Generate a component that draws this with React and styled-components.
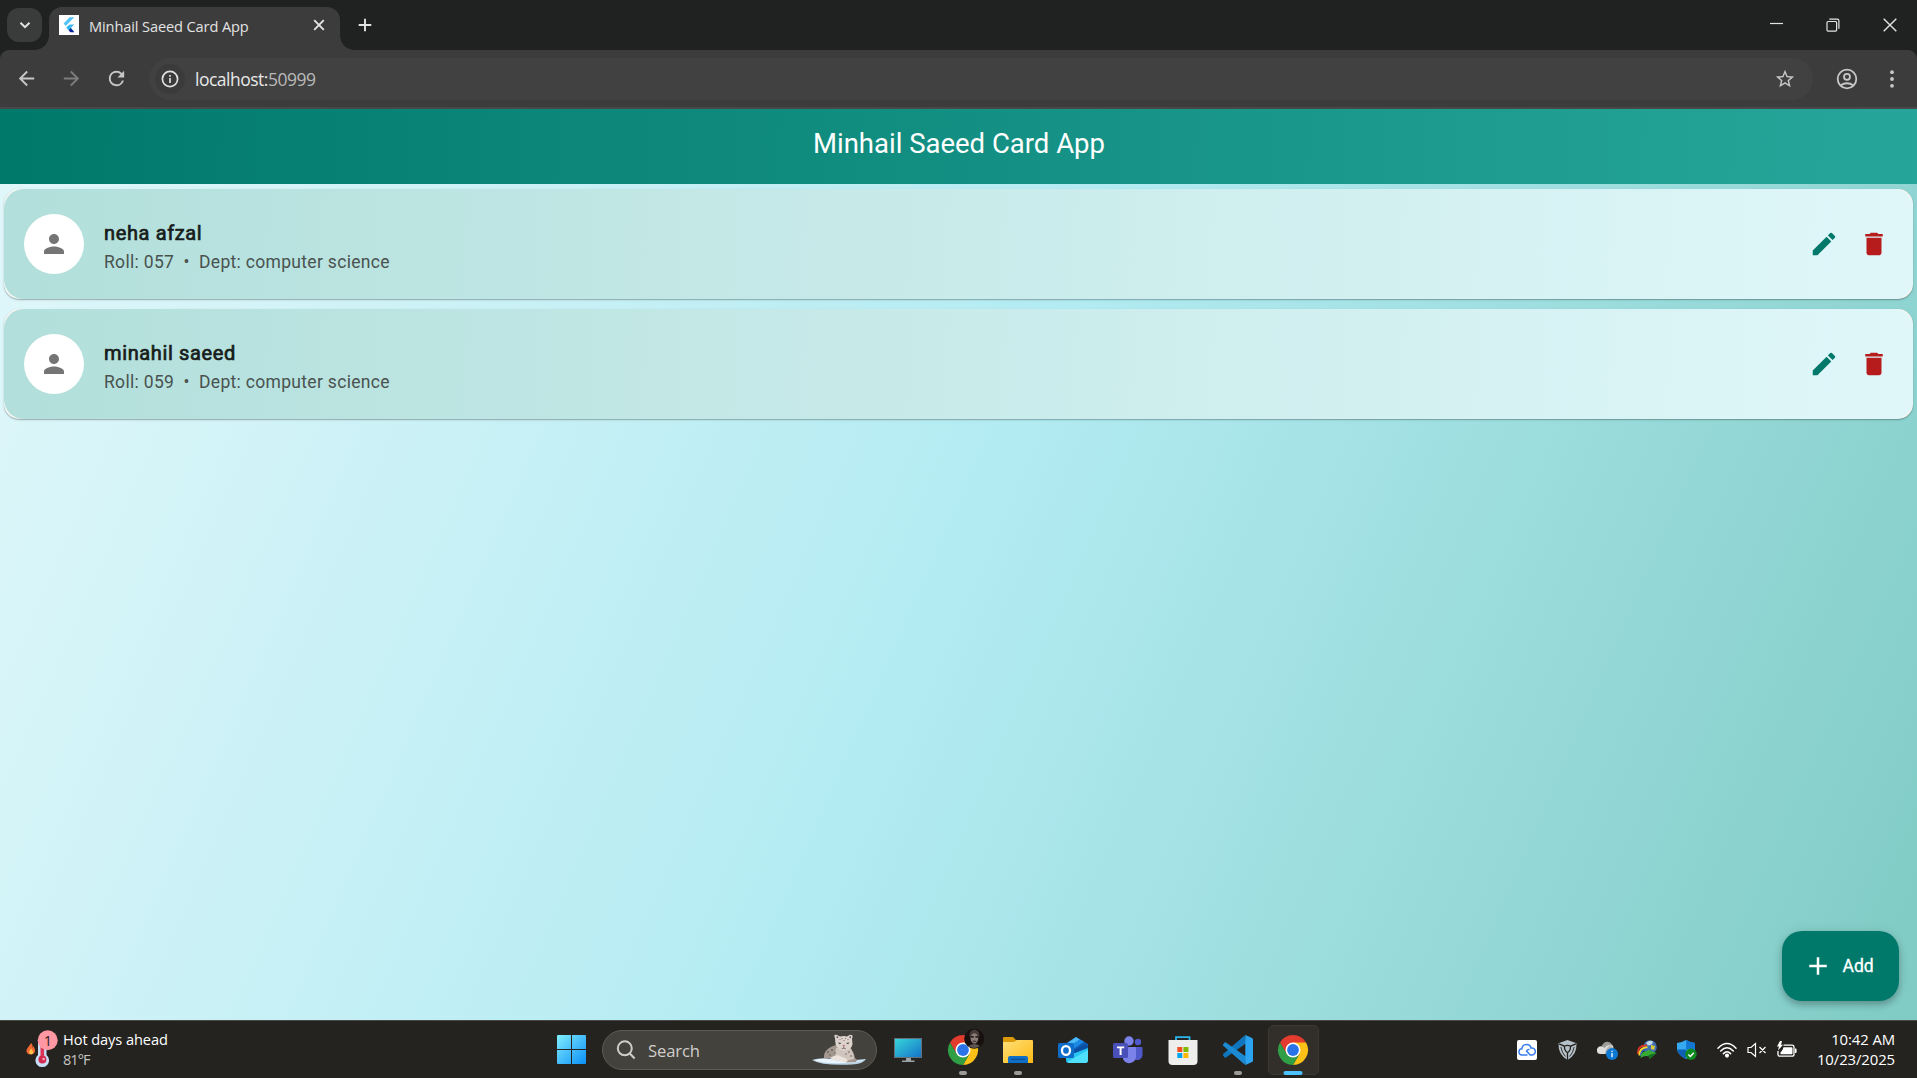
import React from "react";
import styled, { createGlobalStyle } from "styled-components";

const UI = `"Open Sans", "Noto Sans", sans-serif`;
const APP = `Roboto, "Liberation Sans", sans-serif`;

const Global = createGlobalStyle`
  * { box-sizing: border-box; }
  body { margin: 0; overflow: hidden; background: #202221; }
  button { border: 0; padding: 0; background: none; font: inherit; color: inherit; }
  svg { display: block; flex: none; }
`;

const Desktop = styled.div`
  display: flex;
  flex-direction: column;
  width: 100vw;
  height: 100vh;
  font-family: ${UI};
`;

/* ---------- browser chrome ---------- */
const TabStrip = styled.div`
  display: flex;
  height: 50px;
  padding: 7px 0 0 7px;
  background: #202221;
  color: #e3e3e3;
`;
const TabSearch = styled.button`
  display: grid;
  place-items: center;
  width: 35px;
  height: 34px;
  margin: 1px 7px 0 0;
  border-radius: 12px;
  background: #3a3b3b;
`;
const Tab = styled.div`
  position: relative;
  display: flex;
  align-items: center;
  width: 291px;
  height: 43px;
  padding: 0 11px 7px 10px;
  border-radius: 13px 13px 0 0;
  background: #3c3c3c;
  &::before,
  &::after {
    content: "";
    position: absolute;
    bottom: 0;
    width: 14px;
    height: 14px;
  }
  &::before {
    left: -14px;
    background: radial-gradient(circle at 0 0, transparent 13.5px, #3c3c3c 14px);
  }
  &::after {
    right: -14px;
    background: radial-gradient(circle at 100% 0, transparent 13.5px, #3c3c3c 14px);
  }
`;
const TabTitle = styled.span`
  flex: 1;
  margin-left: 10px;
  padding-top: 1px;
  font-size: 14.6px;
  line-height: 20px;
  letter-spacing: -0.12px;
  white-space: nowrap;
`;
const NewTab = styled.button`
  display: grid;
  place-items: center;
  width: 36px;
  height: 36px;
  margin-left: 7px;
`;
const WindowControls = styled.div`
  display: flex;
  margin: -7px -1px 0 auto;
  height: 49px;
`;
const WindowButton = styled.button`
  display: grid;
  place-items: center;
  width: ${(p) => p.$w || 57}px;
`;
const ToolbarWrap = styled.div`
  background: #202221;
`;
const Toolbar = styled.div`
  display: flex;
  align-items: center;
  height: 59px;
  padding: 0 3px 0 4px;
  border-bottom: 2px solid #484848;
  border-radius: 9px 9px 0 0;
  background: #3c3c3c;
  color: #c7c7c7;
`;
const NavButton = styled.button`
  display: grid;
  place-items: center;
  width: 45px;
  height: 45px;
  color: ${(p) => (p.$dim ? "#7d7d7d" : "#c7c7c7")};
`;
const AddressBar = styled.div`
  display: flex;
  align-items: center;
  flex: 1;
  height: 42px;
  margin: 0 11px 0 10px;
  padding: 0 17px 0 6px;
  border-radius: 21px;
  background: #414141;
`;
const SiteInfo = styled.span`
  display: grid;
  place-items: center;
  width: 30px;
  height: 30px;
  border-radius: 50%;
  background: #3b3b3b;
  color: #e0e0e0;
`;
const Url = styled.span`
  flex: 1;
  margin-left: 10px;
  font-size: 17.5px;
  line-height: 24px;
  letter-spacing: -0.5px;
  color: #e8e8e8;
  span { color: #b9b9b9; }
`;

/* ---------- application page ---------- */
const Page = styled.main`
  position: relative;
  display: flex;
  flex-direction: column;
  flex: 1;
  font-family: ${APP};
`;
const AppBar = styled.header`
  display: flex;
  align-items: center;
  justify-content: center;
  height: 75px;
  padding: 0 0 7px 1px;
  background: linear-gradient(92.24deg, #00796b, #26a69a);
  color: #fff;
  font-size: 27.5px;
  line-height: 35px;
`;
const List = styled.section`
  display: flex;
  flex-direction: column;
  gap: 10px;
  flex: 1;
  padding: 5px 4px;
  background: linear-gradient(113.56deg, #e0f7fa, #b2ebf2 50%, #80cbc4);
`;
const Card = styled.article`
  border-radius: 15px;
  background: #f0f5f2;
  box-shadow: 0 1px 1px rgba(0, 0, 0, 0.22), 0 1px 3px rgba(0, 0, 0, 0.11);
`;
const CardBody = styled.div`
  display: flex;
  align-items: center;
  height: 110px;
  padding: 0 14px 0 20px;
  border-radius: 20px;
  background: linear-gradient(93.3deg, #b2dfdb, #e0f7fa);
`;
const Avatar = styled.div`
  display: grid;
  place-items: center;
  width: 60px;
  height: 60px;
  border-radius: 50%;
  background: #fff;
  color: #757575;
`;
const Details = styled.div`
  flex: 1;
  margin-left: 20px;
  padding-top: 6px;
`;
const Name = styled.div`
  font-size: 20px;
  line-height: 30px;
  letter-spacing: 0.625px;
  color: #171d1b;
  -webkit-text-stroke: 0.7px #171d1b;
`;
const Meta = styled.div`
  font-size: 17.5px;
  line-height: 29px;
  letter-spacing: 0.3125px;
  color: #49524f;
  white-space: pre;
`;
const IconButton = styled.button`
  display: grid;
  place-items: center;
  width: 50px;
  height: 50px;
  color: ${(p) => p.$color};
`;
const AddButton = styled.button`
  position: absolute;
  right: 18px;
  bottom: 19px;
  display: flex;
  align-items: center;
  width: 117px;
  height: 70px;
  padding-left: 20.5px;
  gap: 10px;
  border-radius: 20px;
  background: #00796b;
  box-shadow: 0 4px 6px rgba(0, 0, 0, 0.22), 0 1px 12px rgba(0, 0, 0, 0.1);
  color: #fff;
  font-size: 17.5px;
  letter-spacing: 0;
  -webkit-text-stroke: 0.3px #fff;
`;

/* ---------- taskbar ---------- */
const Taskbar = styled.footer`
  display: flex;
  height: 58px;
  border-top: 1px solid #494945;
  background: #24231f;
  color: #fff;
`;
const Weather = styled.div`
  display: flex;
  align-items: center;
  width: 544px;
  padding: 0 0 2px 24px;
  gap: 5px;
`;
const WeatherText = styled.div`
  font-size: 14.6px;
  line-height: 20px;
  letter-spacing: -0.08px;
  div + div { color: #c4c4c2; letter-spacing: -1px; }
`;
const Slot = styled.div`
  position: relative;
  display: grid;
  place-items: center;
  width: 55.1px;
  height: 58px;
  padding-bottom: 1px;
  &::before {
    content: "";
    position: absolute;
    inset: 4px 2px;
    border: ${(p) => (p.$active ? "1px solid #3b3935" : "0")};
    border-radius: 5px;
    background: ${(p) => (p.$active ? "#322f2b" : "none")};
  }
  &::after {
    content: "";
    position: absolute;
    bottom: 4px;
    left: 50%;
    width: ${(p) => (p.$active ? 19 : 8)}px;
    height: 4px;
    border-radius: 2px;
    transform: translateX(-50%);
    background: ${(p) => (p.$active ? "#4cc2ff" : p.$open ? "#9c9b99" : "none")};
  }
  svg { position: relative; }
`;
const SearchBox = styled.div`
  display: flex;
  align-items: center;
  width: 275px;
  height: 40px;
  margin: 9px 3px 0 3px;
  padding: 0 9px 0 13px;
  border: 1px solid #5d5b56;
  border-radius: 20px;
  background: #44423d;
  color: #cfcecb;
  font-size: 16.6px;
  letter-spacing: -0.15px;
  span { flex: 1; margin: 1px 0 0 12px; }
`;
const Tray = styled.div`
  display: flex;
  align-items: center;
  margin-left: auto;
  padding: 0 22px 0 0;
`;
const TrayIcon = styled.div`
  display: grid;
  place-items: center;
  width: ${(p) => p.$w || 40}px;
`;
const Clock = styled.div`
  width: 88px;
  padding-bottom: 2px;
  font-size: 14.9px;
  line-height: 20px;
  letter-spacing: -0.1px;
  text-align: right;
`;

/* ---------- icons ---------- */
const Stroke = ({ size = 20, w = 2, children, box = 24, ...rest }) => (
  <svg width={size} height={size} viewBox={`0 0 ${box} ${box}`} fill="none" stroke="currentColor" strokeWidth={w} {...rest}>
    {children}
  </svg>
);
const Glyph = ({ size = 30, d }) => (
  <svg width={size} height={size} viewBox="0 0 24 24" fill="currentColor"><path d={d} /></svg>
);
const PERSON = "M12 12c2.21 0 4-1.79 4-4s-1.79-4-4-4-4 1.79-4 4 1.79 4 4 4zm0 2c-2.67 0-8 1.34-8 4v2h16v-2c0-2.66-5.33-4-8-4z";
const EDIT = "M3 17.25V21h3.75L17.81 9.94l-3.75-3.75L3 17.25zM20.71 7.04a1 1 0 0 0 0-1.41l-2.34-2.34a1 1 0 0 0-1.41 0l-1.83 1.83 3.75 3.75 1.83-1.83z";
const TRASH = "M6 19c0 1.1.9 2 2 2h8c1.1 0 2-.9 2-2V7H6v12zM19 4h-3.5l-1-1h-5l-1 1H5v2h14V4z";
const ARROW = "M20 11H7.83l5.59-5.59L12 4l-8 8 8 8 1.41-1.41L7.83 13H20v-2z";
const REFRESH = "M17.65 6.35A7.96 7.96 0 0 0 12 4a8 8 0 1 0 7.73 10h-2.08A6 6 0 1 1 12 6c1.66 0 3.14.69 4.22 1.78L13 11h7V4l-2.35 2.35z";
const STAR = "M22 9.24l-7.19-.62L12 2 9.19 8.63 2 9.24l5.46 4.73L5.82 21 12 17.27 18.18 21l-1.63-7.03L22 9.24zM12 15.4l-3.76 2.27 1-4.28-3.32-2.88 4.38-.38L12 6.1l1.71 4.04 4.38.38-3.32 2.88 1 4.28L12 15.4z";
const PLUS = "M19 13h-6v6h-2v-6H5v-2h6V5h2v6h6v2z";

const FlutterIcon = () => (
  <svg width="20" height="20" viewBox="0 0 20 20">
    <path fill="#fff" d="M0 0h20v20H0z" />
    <path fill="#54c5f8" d="M10.7 2.3h4.5L6.8 11 4.6 8.6z" />
    <path fill="#40b6f0" d="M10.7 9.5h4.5L12 12.8H7.4z" />
    <path fill="#29b6f6" d="M7.3 12.8l2.3-2.3 2.3 2.3-2.3 2.3z" />
    <path fill="#01579b" d="M9.6 15.1l2.3-2.3 3.3 4.1h-4z" />
    <path fill="#0d1fa0" d="M9.6 15.1l2.5-.8 3.1 2.9h-3.6z" />
  </svg>
);
const ChromeIcon = ({ photo }) => (
  <svg width="30" height="30" viewBox="0 0 30 30" overflow="visible">
    <path fill="#e33b2e" d="M15 15L2 7.5A15 15 0 0 1 28 7.5z" />
    <path fill="#fbc116" d="M15 7.5h13A15 15 0 0 1 15 30l6.5-11.2z" />
    <path fill="#e33b2e" d="M2 7.5L8.5 18.7 15 7.5z" />
    <path fill="#2f9e44" d="M2 7.5L8.5 18.7l6.5 3.8 6.5-3.7L15 30A15 15 0 0 1 2 7.5z" />
    <circle cx="15" cy="15" r="7.5" fill="#fff" />
    <circle cx="15" cy="15" r="5.9" fill="#2a73e8" />
    {photo && (
      <g>
        <circle cx="26.2" cy="3.8" r="10" fill="#17100f" />
        <ellipse cx="26.4" cy="0" rx="5" ry="5.4" fill="#453b39" />
        <ellipse cx="26.4" cy="3.4" rx="3.8" ry="5.2" fill="#8d7d79" />
        <path fill="#2b2120" d="M22.3 1h3.4v1.800h-3zM27.200 1h3.400v1.800h-3zM24.600 5.800h3.800v1h-3.800z" />
        <path fill="#5e5350" d="M20.500 11q6-4 11.500 0-5.500 4-11.500 0z" />
      </g>
    )}
  </svg>
);
const WeatherIcon = () => (
  <svg width="34" height="40" viewBox="0 0 34 40">
    <path fill="#ef6a30" d="M7 14c-1 3-5 5-4.500 9a4.600 4.600 0 0 0 8.500-.5C11.400 20 10 19 9.600 17l-1 2C9 17 8.500 15 7 14z" />
    <path fill="#ffc14a" d="M7 19c0 2-2 2.500-2 4.500a2.200 2.200 0 0 0 4.300 0C9.300 21.500 7.500 21 7 19z" />
    <path fill="#c9def7" d="M14 12h8.500v14a6.800 6.800 0 1 1-8.500 0z" />
    <path fill="#df3355" d="M16.500 14h3.600v14h-3.600z" />
    <circle cx="18.400" cy="30.500" r="4" fill="#d42a4f" />
    <circle cx="19.600" cy="30" r="1.300" fill="#f7a6b7" />
    <circle cx="23.700" cy="11.300" r="10" fill="#ff98a3" />
    <text x="23.800" y="16.500" fontSize="14.500" textAnchor="middle" fill="#2b1b1d" fontFamily="Open Sans">1</text>
  </svg>
);
const StartIcon = () => (
  <svg width="29" height="29" viewBox="0 0 29 29">
    <defs>
      <linearGradient id="start" gradientUnits="userSpaceOnUse" x1="0" y1="0" x2="29" y2="29">
        <stop stopColor="#7ff0ff" /><stop offset=".5" stopColor="#46bdfb" /><stop offset="1" stopColor="#0a90f6" />
      </linearGradient>
    </defs>
    <path fill="url(#start)" d="M1 0h13v14H0V1a1 1 0 0 1 1-1zM15 0h13a1 1 0 0 1 1 1v13H15zM0 15h14v14H1a1 1 0 0 1-1-1zM15 15h14v13a1 1 0 0 1-1 1H15z" />
  </svg>
);
const LeopardIcon = () => (
  <svg width="55" height="32" viewBox="0 0 55 32">
    <path fill="#b9d4e6" d="M0 26q8-3 22-1 14 2 32 0-3 5-14 5.600Q10 32 0 26z" />
    <path fill="#e9f5fb" d="M2 26q12-3 24 1 14 1 27-1-8 3-22 3Q12 30 2 26z" />
    <path fill="#a3978f" d="M12 24q-1-9 12-13l12 2q6 4 7 11 3 2 1 4l-9 .5-8-3.500z" />
    <path fill="#cfc5bd" d="M24 14l14-1q4 6 4 12l-8 2q-8-3-11-6z" />
    <path fill="#ddd3cc" d="M23 4q-2-4 2-3l3 1.500q4-1 7 0L38 .8q4 0 2 3.700l.5 6q-1 5-9 6.500-7-2-8-7z" />
    <path fill="#413b3b" d="M24.500 2l2 1-1.600 1.400zM39 2l-2 1 1.500 1.400zM26 8.500l3.500 .5-2 1.200zM37.500 8.500l-3.500 .5 2 1.200z" />
    <path fill="#c7727c" d="M30.200 11h3.200l-1.600 1.800z" />
    <path stroke="#584f4d" strokeWidth=".7" d="M31.800 12.500v1.600m-2 .6q2-1 4 0" fill="none" />
    <path fill="#ece4dc" d="M18 24q7-5 12-1 5 1 6 4-4 2-9-.5-4 1-9-2.500z" />
    <g fill="#655c58">
      <circle cx="16" cy="18" r=".9" /><circle cx="20" cy="16" r=".9" /><circle cx="18" cy="21" r=".8" /><circle cx="23" cy="19" r=".8" />
      <circle cx="37" cy="18" r=".8" /><circle cx="39" cy="22" r=".8" /><circle cx="34" cy="20" r=".7" /><circle cx="30" cy="4.500" r=".6" /><circle cx="33.500" cy="4.500" r=".6" /><circle cx="32" cy="6.500" r=".5" />
      <circle cx="28" cy="5.500" r=".5" /><circle cx="36" cy="5.500" r=".5" />
    </g>
  </svg>
);
const MonitorIcon = () => (
  <svg width="28" height="26" viewBox="0 0 28 26">
    <defs><linearGradient id="mon" x1="0" y1="0" x2="1" y2="1"><stop stopColor="#37d5d9" /><stop offset="1" stopColor="#1574c9" /></linearGradient></defs>
    <path fill="#65717a" d="M0 1h28v20H0z" />
    <path fill="url(#mon)" d="M1 2h26v18H1z" />
    <path fill="#9aa3a8" d="M12 21h5v2.600h3.500V25H8v-1.400h4z" />
  </svg>
);
const FolderIcon = () => (
  <svg width="30" height="28" viewBox="0 0 30 28">
    <defs><linearGradient id="fold" x1="0" y1="0" x2="1" y2="1"><stop stopColor="#ffe07a" /><stop offset="1" stopColor="#fdb913" /></linearGradient></defs>
    <path fill="#dc9a0b" d="M0 2q0-1 1-1h9l3 3h16v10H0z" />
    <path fill="url(#fold)" d="M0 6h11l3-2h15q1 0 1 1v22H1q-1 0-1-1z" />
    <path fill="#0f6fc6" d="M5 27v-5q0-2 2-2h16q2 0 2 2v5z" />
    <path fill="#0a4c91" d="M8 22.700h14v1.200H8z" />
  </svg>
);
const OutlookIcon = () => (
  <svg width="30" height="28" viewBox="0 0 30 28">
    <path fill="#0f5fb8" d="M5 9l13-8 12 7v6H5z" />
    <path fill="#4cb8f5" d="M8 8l10-7 4 2.500L9 12z" />
    <path fill="#1c8be6" d="M9 12l13-8.500 4 2L14 14z" />
    <path fill="#0b4fa3" d="M14 15l13-7 3 2v4L18 20z" />
    <path fill="#28c4f4" d="M8 17h9l13-5v12q0 3-3 3H11q-3 0-3-3z" />
    <path fill="#4fe0fb" d="M9 26l21-12v10q0 3-3 3H11z" />
    <rect y="7" width="16" height="15" rx="1.500" fill="#0d6dc9" />
    <ellipse cx="8" cy="14.500" rx="4" ry="4.400" fill="none" stroke="#fff" strokeWidth="2.300" />
  </svg>
);
const TeamsIcon = () => (
  <svg width="30" height="28" viewBox="0 0 30 28">
    <circle cx="25" cy="6" r="3.200" fill="#5059c9" />
    <path fill="#5059c9" d="M19 11h9.500q1 0 1 1v7a5.500 5.500 0 0 1-8 4.500z" />
    <circle cx="16" cy="5" r="4.700" fill="#7b83eb" />
    <path fill="#7b83eb" d="M10 11h13v10a6.800 6.800 0 0 1-13 2z" />
    <rect y="7" width="15" height="15" rx="1.500" fill="#4a50b9" />
    <path fill="#fff" d="M4 10.500h7.200v1.800H8.600V19h-2v-6.700H4z" />
  </svg>
);
const StoreIcon = () => (
  <svg width="30" height="30" viewBox="0 0 30 30">
    <path fill="none" stroke="#2cb7ee" strokeWidth="1.800" d="M8 7V2.200h13.500V7" />
    <path fill="#eeeeed" d="M.5 5h29v21q0 4-4 4h-21q-4 0-4-4z" />
    <path fill="#f25022" d="M9.300 12h5v5h-5z" /><path fill="#7fba00" d="M15.400 12h5v5h-5z" />
    <path fill="#00a4ef" d="M9.300 18h5v5h-5z" /><path fill="#ffb900" d="M15.400 18h5v5h-5z" />
  </svg>
);
const CodeIcon = () => (
  <svg width="30" height="30" viewBox="0 0 30 30">
    <path fill="#0f75bd" d="M0 20.300q-.5-.6.200-1.200L21.500.5l2 7.500L3 22.400q-.8.500-1.400 0z" />
    <path fill="#1b8ad3" d="M0 9.500q-.5.600.2 1.200L21.500 29.500l2-7.500L3 7.400q-.8-.5-1.400 0z" />
    <path fill="#2aa4f0" d="M21.500.3q.7-.5 1.500-.1L29 3q1 .5 1 1.600v20.800q0 1.100-1 1.600l-6 2.800q-.9.400-1.500-.2.800.3.800-.8V1q0-1-.8-.7z" />
  </svg>
);
const CloudAppIcon = () => (
  <svg width="20" height="20" viewBox="0 0 20 20">
    <rect width="20" height="20" rx="2" fill="#fff" />
    <path fill="none" stroke="#3b7df0" strokeWidth="1.500" d="M10.500 15H5.200a3.100 3.100 0 0 1-.3-6.200C5.300 3.200 13 3 14 8a3.500 3.500 0 0 1 1.500 7h-2.300l-3.700-4q1-2 3-1.500" />
  </svg>
);
const ShieldIcon = () => (
  <svg width="19" height="20" viewBox="0 0 19 20">
    <path fill="#b6c0c8" d="M9.500 0l9 3.200Q19 14.500 9.500 20 0 14.500.5 3.200z" />
    <path fill="none" stroke="#24231f" strokeWidth="1.300" d="M1 3.800l5.500 2.400q3-1.600 6 0L18 3.800M6.500 6.200q-.5 4 3 6.500 3.500-2.500 3-6.500M9.500 12.700V20" />
    <path fill="none" stroke="#24231f" strokeWidth=".9" d="M2.800 7q1 5.500 4.600 9.500M16.200 7q-1 5.500-4.600 9.500" />
  </svg>
);
const OneDriveIcon = () => (
  <svg width="21" height="20" viewBox="0 0 21 20">
    <path fill="#9b9b99" d="M4 13a3.500 3.500 0 0 1 .5-7Q8 0 13 2.500 18 6 17 13z" />
    <path fill="#dededc" d="M3.500 14a3.600 3.600 0 0 1 0-7.200q3-.2 4 1.200Q11 3 16 6v8z" />
    <path fill="#b4b4b2" d="M8 14q0-6 5-8.500l3 2v6.500z" />
    <circle cx="15" cy="14" r="6" fill="#0c78d4" />
    <path fill="#fff" d="M14.400 10.700h1.300V12h-1.300zM14.400 13h1.300v4.300h-1.300z" />
  </svg>
);
const DownloadManagerIcon = () => (
  <svg width="20" height="20" viewBox="0 0 20 20">
    <circle cx="13" cy="7" r="6.800" fill="#3f6fb0" />
    <path fill="#c3d8e6" d="M9 3q3-3.500 7-1.500-.5 4-5 4z" />
    <path fill="#dcc93a" d="M14 5l4 1-1 4-3-1z" />
    <path fill="none" stroke="#d8352b" strokeWidth="2" d="M1.200 14Q0 5 10 5.500" />
    <path fill="none" stroke="#f5d528" strokeWidth="2.200" d="M2.600 15.500Q2 7.500 10.500 7.300" />
    <path fill="none" stroke="#2d66c8" strokeWidth="1.400" d="M3.800 16Q4 9 10.500 9" />
    <path fill="#35ab35" d="M3.500 18q0-7 7-7V9.500l9 3.500-7 6v-2.500q-5-1.500-9 1.500z" />
    <path fill="#156d20" d="M11.500 15l8-2-7 6z" />
  </svg>
);
const DefenderIcon = () => (
  <svg width="20" height="20" viewBox="0 0 20 20">
    <path fill="#35aaf0" d="M9 0q4 2.500 9 3v7q-2 6-9 9-7-3-9-9V3q5-.5 9-3z" />
    <path fill="#1477d3" d="M9 0q4 2.500 9 3v6.500H9z" /><path fill="#0e60b5" d="M0 9.500h9V19Q2 16 0 9.500z" />
    <circle cx="14" cy="14.300" r="5.700" fill="#0f8a21" />
    <path fill="none" stroke="#fff" strokeWidth="1.400" d="M11.300 14.500l2 2 3.500-3.800" />
  </svg>
);
const WifiIcon = () => (
  <svg width="20" height="16" viewBox="0 0 20 16" fill="none" stroke="#fff" strokeWidth="1.500" strokeLinecap="round">
    <path d="M1 6.200Q10-3 19 6.200M3.700 9Q10 2.500 16.300 9M6.400 11.600Q10 8 13.600 11.600" /><circle cx="10" cy="13.600" r="1.300" fill="#fff" />
  </svg>
);
const MutedIcon = () => (
  <svg width="20" height="16" viewBox="0 0 20 16" fill="none" stroke="#fff" strokeWidth="1.200">
    <path d="M1 5.500h3L8.500 1.500v13L4 10.500H1zM12.500 5l6 6M18.500 5l-6 6" />
  </svg>
);
const BatteryIcon = () => (
  <svg width="20" height="17" viewBox="0 0 20 17">
    <path fill="none" stroke="#fff" strokeWidth="1.300" d="M6.500 4.200H15q2 0 2 2v7q0 2-2 2H3q-2 0-2-2V10" />
    <path fill="#fff" d="M3.500 11.500Q6 9 6.500 6.200h8q1 0 1 1v5q0 1-1 1H4q-.5 0-.5-.500zM18 7.500h.6q1 0 1 1v2.500q0 1-1 1H18z" />
    <path fill="#fff" d="M3 0L0 5.500h2L1 9.500l5-5.700H4L5 0z" />
  </svg>
);

const students = [
  { name: "neha afzal", roll: "057", dept: "computer science" },
  { name: "minahil saeed", roll: "059", dept: "computer science" },
];

function Browser() {
  return (
    <>
      <TabStrip>
        <TabSearch><Stroke size={12} box={12} w={2}><path d="M1.500 3.700L6 8.200l4.500-4.500" /></Stroke></TabSearch>
        <Tab>
          <FlutterIcon />
          <TabTitle>Minhail Saeed Card App</TabTitle>
          <Stroke size={20} box={20} w={1.9}><path d="M5.200 5.200l9.600 9.600M14.800 5.200l-9.600 9.600" /></Stroke>
        </Tab>
        <NewTab><Stroke size={14} box={14} w={1.9}><path d="M7 .7v12.600M.7 7h12.600" /></Stroke></NewTab>
        <WindowControls>
          <WindowButton $w={56}><Stroke size={13} box={13} w={1.2}><path d="M0 5.500h13" /></Stroke></WindowButton>
          <WindowButton><Stroke size={14} box={14} w={1.2}><rect x="1" y="3.500" width="9.600" height="9.600" rx="1" /><path d="M3.300 1.100h8q1.600 0 1.600 1.600v8" /></Stroke></WindowButton>
          <WindowButton><Stroke size={14} box={14} w={1.4}><path d="M.7.700l12.600 12.600M13.300.700L.7 13.300" /></Stroke></WindowButton>
        </WindowControls>
      </TabStrip>
      <ToolbarWrap>
        <Toolbar>
          <NavButton><Glyph size={23} d={ARROW} /></NavButton>
          <NavButton $dim><svg width="23" height="23" viewBox="0 0 24 24" fill="currentColor"><path transform="rotate(180 12 12)" d={ARROW} /></svg></NavButton>
          <NavButton><Glyph size={23} d={REFRESH} /></NavButton>
          <AddressBar>
            <SiteInfo>
              <Stroke size={18} box={18} w={1.7}><circle cx="9" cy="9" r="7.600" /><path d="M9 8v5M9 5v1.800" /></Stroke>
            </SiteInfo>
            <Url>localhost:<span>50999</span></Url>
            <Glyph size={22} d={STAR} />
          </AddressBar>
          <NavButton>
            <Stroke size={22} box={22} w={1.8}><circle cx="11" cy="11" r="9.300" /><circle cx="11" cy="8.800" r="3" /><path d="M4.500 17.500q6.500-4.500 13 0" /></Stroke>
          </NavButton>
          <NavButton>
            <svg width="20" height="20" viewBox="0 0 20 20" fill="currentColor"><circle cx="10" cy="3.200" r="1.900" /><circle cx="10" cy="10" r="1.900" /><circle cx="10" cy="16.800" r="1.900" /></svg>
          </NavButton>
        </Toolbar>
      </ToolbarWrap>
    </>
  );
}

function StudentCard({ name, roll, dept }) {
  return (
    <Card>
      <CardBody>
        <Avatar><Glyph d={PERSON} /></Avatar>
        <Details>
          <Name>{name}</Name>
          <Meta>{`Roll: ${roll}  •  Dept: ${dept}`}</Meta>
        </Details>
        <IconButton $color="#00796b"><Glyph d={EDIT} /></IconButton>
        <IconButton $color="#b71c1c"><Glyph d={TRASH} /></IconButton>
      </CardBody>
    </Card>
  );
}

export default function App() {
  return (
    <Desktop>
      <Global />
      <Browser />
      <Page>
        <AppBar>Minhail Saeed Card App</AppBar>
        <List>{students.map((s) => <StudentCard key={s.roll} {...s} />)}</List>
        <AddButton><Glyph d={PLUS} />Add</AddButton>
      </Page>
      <Taskbar>
        <Weather>
          <WeatherIcon />
          <WeatherText><div>Hot days ahead</div><div>81°F</div></WeatherText>
        </Weather>
        <Slot><StartIcon /></Slot>
        <SearchBox>
          <Stroke size={20} box={20} w={2}><circle cx="8.800" cy="8.300" r="7" /><path d="M13.600 13.200l5 5.300" /></Stroke>
          <span>Search</span>
          <LeopardIcon />
        </SearchBox>
        <Slot><MonitorIcon /></Slot>
        <Slot $open><ChromeIcon photo /></Slot>
        <Slot $open><FolderIcon /></Slot>
        <Slot><OutlookIcon /></Slot>
        <Slot><TeamsIcon /></Slot>
        <Slot><StoreIcon /></Slot>
        <Slot $open><CodeIcon /></Slot>
        <Slot $active><ChromeIcon /></Slot>
        <Tray>
          <TrayIcon><CloudAppIcon /></TrayIcon>
          <TrayIcon><ShieldIcon /></TrayIcon>
          <TrayIcon><OneDriveIcon /></TrayIcon>
          <TrayIcon><DownloadManagerIcon /></TrayIcon>
          <TrayIcon><DefenderIcon /></TrayIcon>
          <TrayIcon><WifiIcon /></TrayIcon>
          <TrayIcon $w={20}><MutedIcon /></TrayIcon>
          <TrayIcon $w={40}><BatteryIcon /></TrayIcon>
          <Clock><div>10:42 AM</div><div>10/23/2025</div></Clock>
        </Tray>
      </Taskbar>
    </Desktop>
  );
}
